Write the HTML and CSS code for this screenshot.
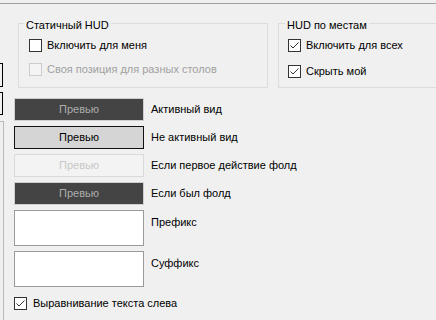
FILE: index.html
```html
<!DOCTYPE html>
<html lang="ru">
<head>
<meta charset="utf-8">
<title>HUD</title>
<link rel="stylesheet" href="styles.css">
</head>
<body>
<div class="window">
  <div class="topline"></div>
  <div class="main">
    <div class="side">
      <div class="tab tab-first"></div>
      <div class="tab tab-second"></div>
      <div class="page-edge"></div>
    </div>
    <div class="content">
      <div class="groups">
        <section class="group group-static">
          <div class="group-head"><span class="group-title">Статичный HUD</span></div>
          <div class="group-body">
            <div class="check check-first">
              <span class="box"></span>
              <span class="check-label">Включить для меня</span>
            </div>
            <div class="check check-second disabled">
              <span class="box"></span>
              <span class="check-label">Своя позиция для разных столов</span>
            </div>
          </div>
        </section>
        <section class="group group-seats">
          <div class="group-head"><span class="group-title">HUD по местам</span></div>
          <div class="group-body">
            <div class="check check-first">
              <span class="box"><svg viewBox="0 0 11 11" width="11" height="11"><polyline points="1.5,5.5 4,8 9.5,2.5"/></svg></span>
              <span class="check-label">Включить для всех</span>
            </div>
            <div class="check check-second-wide">
              <span class="box"><svg viewBox="0 0 11 11" width="11" height="11"><polyline points="1.5,5.5 4,8 9.5,2.5"/></svg></span>
              <span class="check-label">Скрыть мой</span>
            </div>
          </div>
        </section>
      </div>

      <div class="styles">
        <div class="style-row">
          <div class="preview preview-dark">Превью</div>
          <span class="row-label">Активный вид</span>
        </div>
        <div class="style-row">
          <div class="preview preview-light">Превью</div>
          <span class="row-label">Не активный вид</span>
        </div>
        <div class="style-row">
          <div class="preview preview-faded">Превью</div>
          <span class="row-label">Если первое действие фолд</span>
        </div>
        <div class="style-row">
          <div class="preview preview-dark">Превью</div>
          <span class="row-label">Если был фолд</span>
        </div>
        <div class="text-row">
          <div class="textbox"></div>
          <span class="row-label text-label">Префикс</span>
        </div>
        <div class="text-row">
          <div class="textbox"></div>
          <span class="row-label text-label">Суффикс</span>
        </div>
      </div>

      <div class="check check-align">
        <span class="box"><svg viewBox="0 0 11 11" width="11" height="11"><polyline points="1.5,5.5 4,8 9.5,2.5"/></svg></span>
        <span class="check-label">Выравнивание текста слева</span>
      </div>
    </div>
  </div>
</div>
</body>
</html>
```

FILE: styles.css
```css
html, body {
  margin: 0;
  padding: 0;
}

body {
  width: 436px;
  height: 320px;
  overflow: hidden;
  background: #f0f0f0;
  color: #000;
  font-family: "Liberation Sans", Arial, sans-serif;
  font-size: 11px;
  line-height: 15px;
}

.window {
  width: 436px;
  height: 320px;
  overflow: hidden;
}

.topline {
  margin-top: 3px;
  height: 1px;
  background: #a0a0a0;
}

.main {
  display: flex;
  height: 316px;
}

.side {
  width: 4px;
  flex: 0 0 4px;
  display: flex;
  flex-direction: column;
}

.tab {
  box-sizing: border-box;
  width: 3px;
  border: 1px solid #000;
  border-left: none;
}

.tab-first {
  margin-top: 59px;
  height: 24px;
}

.tab-second {
  margin-top: 5px;
  height: 23px;
}

.page-edge {
  box-sizing: border-box;
  margin-top: 6px;
  width: 4px;
  flex: 1;
  border-top: 1px solid #b9b9b9;
  border-right: 1px solid #b9b9b9;
}

.content {
  flex: 1;
  min-width: 0;
}

/* group boxes */
.groups {
  display: flex;
  gap: 10px;
  margin-top: 14px;
  margin-left: 14px;
}

.group {
  box-sizing: border-box;
  height: 70px;
  display: flex;
  flex-direction: column;
  flex: 0 0 auto;
}

.group-static {
  width: 250px;
}

.group-seats {
  width: 200px;
}

.group-head {
  display: flex;
  height: 15px;
}

.group-head::before,
.group-head::after {
  content: "";
  box-sizing: border-box;
  margin-top: 5px;
  height: 10px;
  border-top: 1px solid #dcdcdc;
}

.group-head::before {
  width: 6px;
  border-left: 1px solid #dcdcdc;
}

.group-seats .group-head::before {
  width: 7px;
}

.group-head::after {
  flex: 1;
  border-right: 1px solid #dcdcdc;
}

.group-title {
  padding: 0 2px;
  white-space: nowrap;
}

.group-body {
  flex: 1;
  border: 1px solid #dcdcdc;
  border-top: none;
}

.check {
  display: flex;
  align-items: center;
  gap: 5px;
  height: 15px;
  white-space: nowrap;
}

.group-static .check {
  margin-left: 10px;
}

.group-seats .check {
  margin-left: 9px;
}

.check-first {
  margin-top: 5px;
}

.check-second {
  margin-top: 9px;
}

.check-second-wide {
  margin-top: 11px;
}

.box {
  box-sizing: border-box;
  width: 13px;
  height: 13px;
  flex: 0 0 13px;
  border: 1px solid #333;
  background: #fff;
  display: flex;
}

.box svg {
  display: block;
}

.box polyline {
  fill: none;
  stroke: #333;
  stroke-width: 1;
}

.disabled .box {
  border-color: #cccccc;
  background: #f4f4f4;
}

.disabled .check-label {
  color: #a0a0a0;
}

/* style rows */
.styles {
  margin-top: 10px;
  margin-left: 10px;
  display: flex;
  flex-direction: column;
  gap: 5px;
}

.style-row {
  display: flex;
  align-items: center;
  gap: 7px;
  height: 23px;
}

.preview {
  box-sizing: border-box;
  width: 130px;
  height: 23px;
  display: flex;
  align-items: center;
  justify-content: center;
  flex: 0 0 130px;
}

.preview-dark {
  background: #444444;
  border: 1px solid #cfcfcf;
  color: #adadad;
}

.preview-light {
  background: #d5d5d5;
  border: 1px solid #111;
  color: #000;
}

.preview-faded {
  background: #f3f3f3;
  border: 1px solid #dadada;
  color: #c8c8c8;
}

.row-label {
  white-space: nowrap;
}

.text-row {
  display: flex;
  align-items: flex-start;
  gap: 7px;
  height: 36px;
}

.textbox {
  box-sizing: border-box;
  width: 130px;
  height: 36px;
  flex: 0 0 130px;
  background: #fff;
  border: 1px solid #9a9a9a;
}

.text-label {
  padding-top: 5px;
}

.check-align {
  margin-top: 9px;
  margin-left: 10px;
  gap: 6px;
}
```
